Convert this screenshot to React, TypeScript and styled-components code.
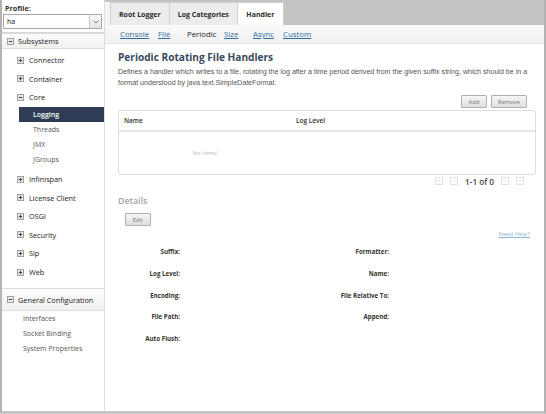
import React from 'react';
import styled, { createGlobalStyle } from 'styled-components';

const Global = createGlobalStyle`
  html, body { margin: 0; padding: 0; background: #fff; }
  body { font-family: "Open Sans", "DejaVu Sans", sans-serif; }
  * { box-sizing: border-box; }
`;

const Frame = styled.div`
  width: 546px;
  height: 414px;
  border-left: 2px solid #b4b4b4;
  border-right: 2px solid #b4b4b4;
  border-bottom: 3px solid #c6c6c6;
  display: flex;
  overflow: hidden;
  background: #fff;
`;

/* ---------- sidebar ---------- */
const Sidebar = styled.aside`
  width: 103px;
  flex: none;
  border-right: 1px solid #dedede;
  display: flex;
  flex-direction: column;
`;

const ProfileBox = styled.div`
  padding: 3px 2px 3px 1px;
  border-bottom: 1px solid #d8d8d8;
`;

const ProfileLabel = styled.div`
  font-weight: bold;
  font-size: 7.2px;
  line-height: 10px;
  color: #333;
  padding-left: 2px;
`;

const Select = styled.div`
  margin-top: 1px;
  height: 15px;
  border: 1px solid #a8a8a8;
  display: flex;
  align-items: center;
  font-size: 7px;
  color: #111;
  background: #fff;
`;

const SelectText = styled.span`
  flex: 1;
  padding-left: 3px;
`;

const SelectBtn = styled.span`
  width: 12px;
  height: 13px;
  border-left: 1px solid #c8c8c8;
  background: linear-gradient(#fafafa, #e4e4e4);
  display: flex;
  align-items: center;
  justify-content: center;
`;

const GroupHeader = styled.div<{ $h: number }>`
  height: ${p => p.$h}px;
  display: flex;
  align-items: center;
  gap: 4px;
  padding-left: 5px;
  font-size: 7.3px;
  color: #222;
  background: linear-gradient(#fbfbfb, #f1f1f1);
  border-top: 1px solid #dcdcdc;
  border-bottom: 1px solid #dcdcdc;
`;

const Tree = styled.div<{ $pad?: number }>`
  display: flex;
  flex-direction: column;
  padding-top: ${p => p.$pad ?? 0}px;
`;

const Node = styled.div`
  height: 18.6px;
  display: flex;
  align-items: center;
  gap: 5px;
  padding-left: 15px;
  font-size: 7.3px;
  color: #222;
`;

const Children = styled.div`
  display: flex;
  flex-direction: column;
  padding-left: 17px;
  padding-bottom: 3px;
`;

const Leaf = styled.div<{ $sel?: boolean; $indent?: number }>`
  height: 15px;
  display: flex;
  align-items: center;
  padding-left: ${p => p.$indent ?? 14}px;
  font-size: 7px;
  color: ${p => (p.$sel ? '#fff' : '#555')};
  background: ${p => (p.$sel ? '#2e3d55' : 'transparent')};
  font-weight: ${p => (p.$sel ? 600 : 400)};
`;

const Spacer = styled.div<{ $h: number }>`
  height: ${p => p.$h}px;
  flex: none;
`;

const BoxIcon: React.FC<{ plus?: boolean }> = ({ plus }) => (
  <svg width="7" height="7" viewBox="0 0 7 7">
    <rect x="0.5" y="0.5" width="6" height="6" fill="#e8e8e8" stroke="#a0a0a0" />
    <line x1="1.8" y1="3.5" x2="5.2" y2="3.5" stroke="#444" strokeWidth="1" />
    {plus && <line x1="3.5" y1="1.8" x2="3.5" y2="5.2" stroke="#444" strokeWidth="1" />}
  </svg>
);

/* ---------- main ---------- */
const Main = styled.main`
  flex: 1;
  display: flex;
  flex-direction: column;
  min-width: 0;
`;

const TabBar = styled.div`
  height: 25px;
  background: #c3c3c3;
  display: flex;
  align-items: flex-end;
`;

const TabGutter = styled.div`
  width: 5px;
  height: 23px;
  background: #f4f4f4;
`;

const Tab = styled.div<{ $active?: boolean }>`
  height: 23px;
  padding: 0 ${p => (p.$active ? 8.5 : 8)}px;
  display: flex;
  align-items: center;
  font-size: 7px;
  font-weight: bold;
  color: #2a2a2a;
  background: ${p => (p.$active ? '#fff' : '#ececec')};
  border: 1px solid #cfcfcf;
  border-bottom: none;
  margin-right: -1px;
`;

const SubNav = styled.div`
  height: 19px;
  background: linear-gradient(#f9f9f9, #f1f1f1);
  display: flex;
  align-items: center;
  padding-left: 15px;
  border-bottom: 1px solid #e8e8e8;
`;

const SubLink = styled.span<{ $active?: boolean; $w: number }>`
  width: ${p => p.$w}px;
  font-size: 7.8px;
  color: ${p => (p.$active ? '#222' : '#2d6c9c')};
  text-decoration: ${p => (p.$active ? 'none' : 'underline')};
`;

const Content = styled.div`
  flex: 1;
  padding: 7px 8px 0 13px;
  display: flex;
  flex-direction: column;
`;

const Title = styled.h1`
  margin: 0;
  font-size: 10.1px;
  font-weight: bold;
  color: #3a4a5c;
  line-height: 13px;
`;

const Desc = styled.p`
  margin: 3px 0 0;
  font-family: "Liberation Sans", Arial, sans-serif;
  font-size: 7.1px;
  line-height: 11px;
  color: #555;
`;

const BtnRow = styled.div`
  display: flex;
  justify-content: flex-end;
  gap: 4px;
  padding-right: 9px;
  margin-top: 6px;
`;

const Btn = styled.button<{ $w: number }>`
  width: ${p => p.$w}px;
  height: 13px;
  padding: 0;
  font-family: "Open Sans", sans-serif;
  font-size: 5.8px;
  color: #777;
  border: 1px solid #b0b0b0;
  border-radius: 1px;
  background: linear-gradient(#f6f6f6, #dedede);
`;

const Table = styled.div`
  margin-top: 2px;
  height: 65px;
  border: 1px solid #dcdcdc;
  border-radius: 3px;
  display: flex;
  flex-direction: column;
`;

const THead = styled.div`
  height: 21px;
  display: grid;
  grid-template-columns: 172px 1fr;
  align-items: center;
  padding-left: 5px;
  border-bottom: 2px solid #e6e6e6;
  font-size: 6.5px;
  font-weight: 600;
  color: #333;
`;

const TBody = styled.div`
  flex: 1;
  display: flex;
  align-items: center;
  padding-left: 74px;
  font-size: 5.5px;
  color: #bbb;
`;

const Pager = styled.div`
  display: flex;
  justify-content: flex-end;
  align-items: center;
  gap: 7px;
  padding-right: 12px;
  height: 12px;
`;

const PagerBtn = styled.span`
  width: 8px;
  height: 8px;
  border: 1px solid #e2e2e2;
  display: flex;
  align-items: center;
  justify-content: center;
  font-size: 5.5px;
  color: #c8c8c8;
  line-height: 1;
`;

const PagerText = styled.span`
  font-size: 8.2px;
  font-weight: 600;
  color: #444;
`;

const DetailsTitle = styled.h2`
  margin: 8px 0 0;
  font-size: 8.8px;
  font-weight: 600;
  color: #a4a4a4;
  line-height: 12px;
`;

const EditRow = styled.div`
  display: flex;
  padding-left: 7px;
  margin-top: 6px;
`;

const HelpRow = styled.div`
  display: flex;
  justify-content: flex-end;
  padding-right: 6px;
  margin-top: 4px;
  line-height: 8px;
`;

const HelpLink = styled.span`
  font-size: 5.9px;
  color: #8eb4d0;
  text-decoration: underline;
`;

const Form = styled.div`
  display: grid;
  grid-template-columns: 62px 139px 70px 1fr;
  grid-auto-rows: 21.75px;
  margin-top: 3px;
`;

const Label = styled.div`
  font-size: 6.2px;
  font-weight: bold;
  color: #333;
  text-align: right;
  line-height: 21.75px;
`;

const Value = styled.div``;

const tree = ['Connector', 'Container'];
const tree2 = ['Infinispan', 'License Client', 'OSGi', 'Security', 'Sip', 'Web'];

const fields: [string, string][] = [
  ['Suffix:', 'Formatter:'],
  ['Log Level:', 'Name:'],
  ['Encoding:', 'File Relative To:'],
  ['File Path:', 'Append:'],
  ['Auto Flush:', ''],
];

export default function App() {
  return (
    <>
      <Global />
      <Frame>
        <Sidebar>
          <ProfileBox>
            <ProfileLabel>Profile:</ProfileLabel>
            <Select>
              <SelectText>ha</SelectText>
              <SelectBtn>
                <svg width="6" height="4" viewBox="0 0 6 4">
                  <path d="M0.8 0.8 L3 3 L5.2 0.8" fill="none" stroke="#777" strokeWidth="1" />
                </svg>
              </SelectBtn>
            </Select>
          </ProfileBox>
          <GroupHeader $h={16}>
            <BoxIcon />
            Subsystems
          </GroupHeader>
          <Tree $pad={2}>
            {tree.map(t => (
              <Node key={t}>
                <BoxIcon plus />
                {t}
              </Node>
            ))}
            <Node>
              <BoxIcon />
              Core
            </Node>
            <Children>
              <Leaf $sel>Logging</Leaf>
              <Leaf>Threads</Leaf>
              <Leaf>JMX</Leaf>
              <Leaf>JGroups</Leaf>
            </Children>
            {tree2.map(t => (
              <Node key={t}>
                <BoxIcon plus />
                {t}
              </Node>
            ))}
          </Tree>
          <Spacer $h={7} />
          <GroupHeader $h={23}>
            <BoxIcon />
            General Configuration
          </GroupHeader>
          <Tree>
            <Leaf $indent={21}>Interfaces</Leaf>
            <Leaf $indent={21}>Socket Binding</Leaf>
            <Leaf $indent={21}>System Properties</Leaf>
          </Tree>
        </Sidebar>
        <Main>
          <TabBar>
            <TabGutter />
            <Tab>Root Logger</Tab>
            <Tab>Log Categories</Tab>
            <Tab $active>Handler</Tab>
          </TabBar>
          <SubNav>
            <SubLink $w={38}>Console</SubLink>
            <SubLink $w={29}>File</SubLink>
            <SubLink $active $w={37}>Periodic</SubLink>
            <SubLink $w={29}>Size</SubLink>
            <SubLink $w={30}>Async</SubLink>
            <SubLink $w={40}>Custom</SubLink>
          </SubNav>
          <Content>
            <Title>Periodic Rotating File Handlers</Title>
            <Desc>
              Defines a handler which writes to a file, rotating the log after a time period derived from the given suffix string, which should be in a format understood by java.text.SimpleDateFormat.
            </Desc>
            <BtnRow>
              <Btn $w={26}>Add</Btn>
              <Btn $w={36}>Remove</Btn>
            </BtnRow>
            <Table>
              <THead>
                <span>Name</span>
                <span>Log Level</span>
              </THead>
              <TBody>No Items!</TBody>
            </Table>
            <Pager>
              <PagerBtn>«</PagerBtn>
              <PagerBtn>‹</PagerBtn>
              <PagerText>1-1 of 0</PagerText>
              <PagerBtn>›</PagerBtn>
              <PagerBtn>»</PagerBtn>
            </Pager>
            <DetailsTitle>Details</DetailsTitle>
            <EditRow>
              <Btn $w={26}>Edit</Btn>
            </EditRow>
            <HelpRow>
              <HelpLink>Need Help?</HelpLink>
            </HelpRow>
            <Form>
              {fields.map(([a, b]) => (
                <React.Fragment key={a}>
                  <Label>{a}</Label>
                  <Value />
                  <Label>{b}</Label>
                  <Value />
                </React.Fragment>
              ))}
            </Form>
          </Content>
        </Main>
      </Frame>
    </>
  );
}
